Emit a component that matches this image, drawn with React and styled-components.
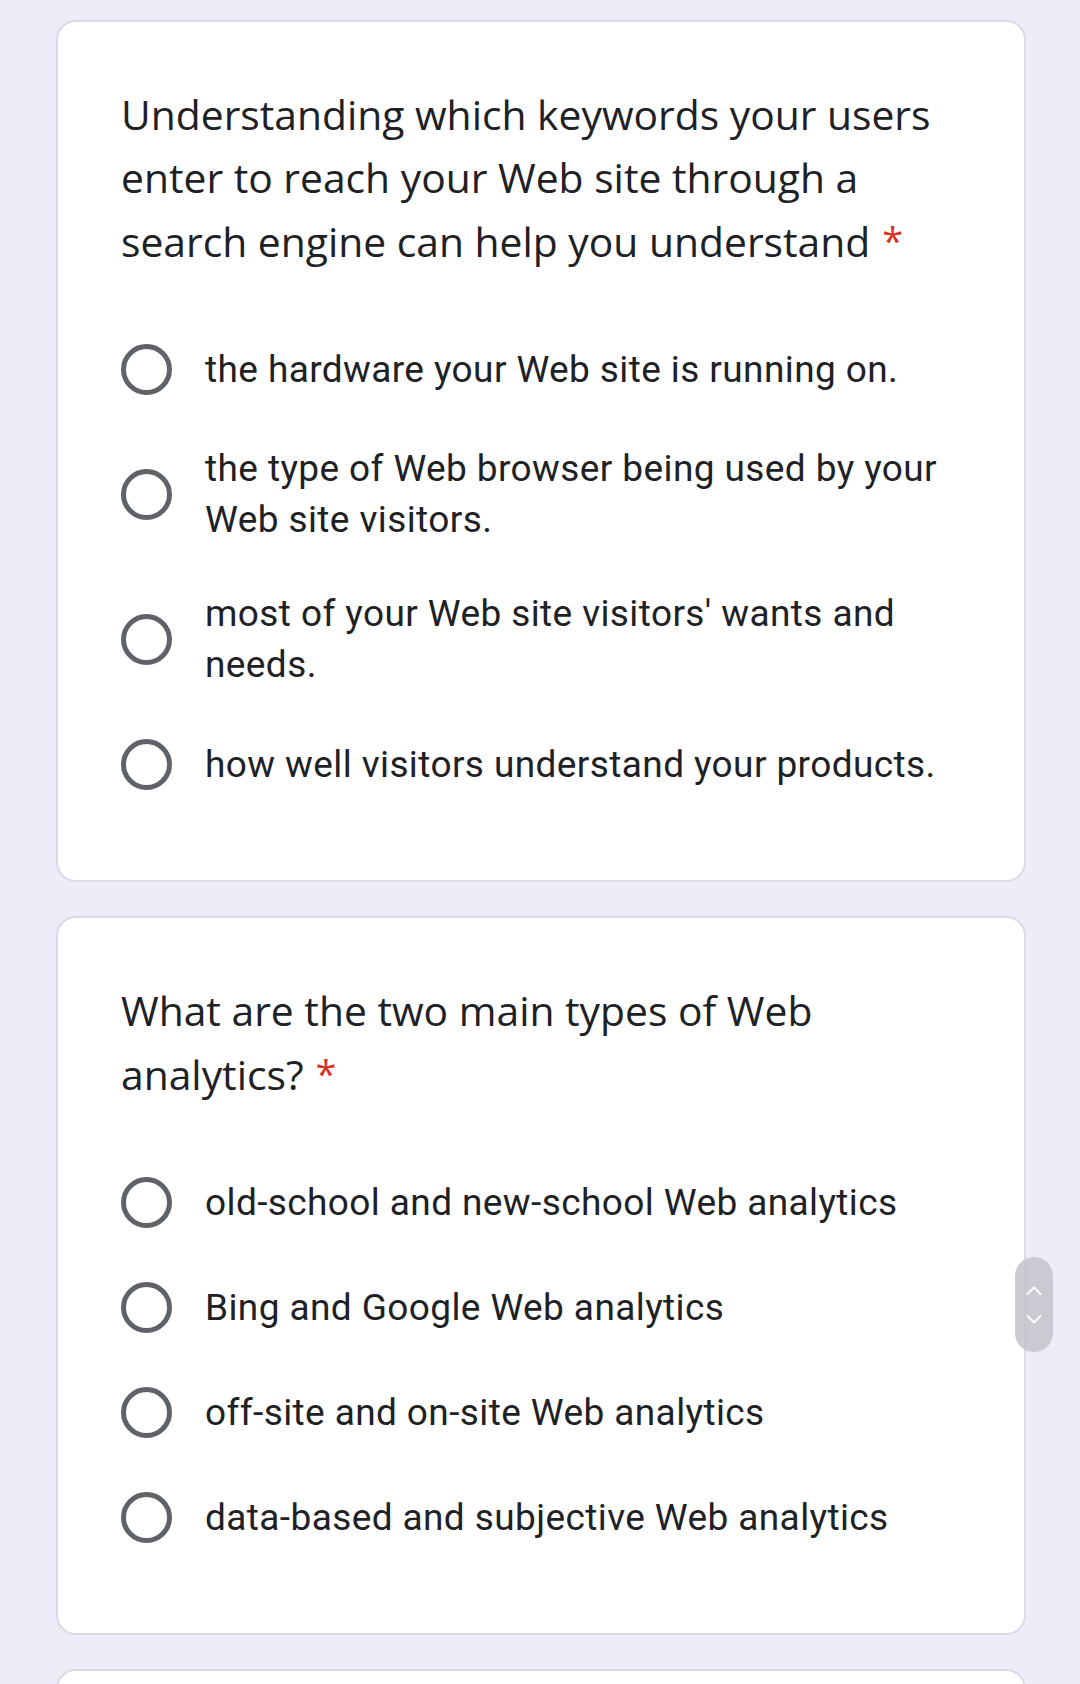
import React from "react";
import styled, { createGlobalStyle } from "styled-components";

const Global = createGlobalStyle`
  body {
    margin: 0;
    background: #efebf8;
    font-family: Roboto, "Liberation Sans", sans-serif;
  }
`;

const Page = styled.div`
  display: flex;
  flex-direction: column;
  gap: 34px;
  padding: 20px 54px 40px 56px;
`;

const Card = styled.section`
  background: #fff;
  border: 2px solid #dcdae2;
  border-radius: 20px;
  padding: 61px 64px 85px 63px;
  min-height: ${(p) => p.minH || 0}px;
`;

const Title = styled.h2`
  margin: 0;
  font-family: "Open Sans", sans-serif;
  font-weight: 400;
  font-size: 40.8px;
  line-height: 63px;
  color: #202124;
`;

const Star = styled.span`
  color: #d93025;
  margin-left: 12px;
  font-size: 38px;
  vertical-align: 2px;
`;

const Options = styled.div`
  display: flex;
  flex-direction: column;
  gap: 43px;
  margin-top: 65px;
`;

const Option = styled.label`
  display: flex;
  align-items: center;
  gap: 33px;
`;

const RadioBox = styled.span`
  flex: none;
  width: 51px;
  height: 62px;
  display: flex;
  align-items: center;
  justify-content: center;
`;

const Radio = styled.span`
  width: 51px;
  height: 51px;
  box-sizing: border-box;
  border-radius: 50%;
  border: 5px solid #5f6368;
`;

const OptionText = styled.span`
  font-size: 37px;
  line-height: 51px;
  color: #202124;
  letter-spacing: 0.4px;
`;

const Scroller = styled.div`
  position: fixed;
  right: 27px;
  top: 1257px;
  width: 38px;
  height: 95px;
  border-radius: 19px;
  background: rgba(196, 195, 202, 0.85);
  display: flex;
  flex-direction: column;
  align-items: center;
  justify-content: center;
  gap: 20px;
`;

const questions = [
  {
    title:
      "Understanding which keywords your users enter to reach your Web site through a search engine can help you understand",
    options: [
      "the hardware your Web site is running on.",
      "the type of Web browser being used by your Web site visitors.",
      "most of your Web site visitors' wants and needs.",
      "how well visitors understand your products.",
    ],
  },
  {
    title: "What are the two main types of Web analytics?",
    options: [
      "old-school and new-school Web analytics",
      "Bing and Google Web analytics",
      "off-site and on-site Web analytics",
      "data-based and subjective Web analytics",
    ],
  },
];

const Chevron = ({ up }) => (
  <svg width="16" height="9" viewBox="0 0 16 9">
    <path
      d={up ? "M1.5 8 L8 1.5 L14.5 8" : "M1.5 1 L8 7.5 L14.5 1"}
      fill="none"
      stroke="#fff"
      strokeWidth="1.8"
      strokeLinecap="round"
      strokeLinejoin="round"
    />
  </svg>
);

export default function App() {
  return (
    <>
      <Global />
      <Page>
        {questions.map((q) => (
          <Card key={q.title}>
            <Title>
              {q.title}
              <Star>*</Star>
            </Title>
            <Options>
              {q.options.map((o) => (
                <Option key={o}>
                  <RadioBox>
                    <Radio />
                  </RadioBox>
                  <OptionText>{o}</OptionText>
                </Option>
              ))}
            </Options>
          </Card>
        ))}
        <Card minH={300} />
      </Page>
      <Scroller>
        <Chevron up />
        <Chevron />
      </Scroller>
    </>
  );
}
